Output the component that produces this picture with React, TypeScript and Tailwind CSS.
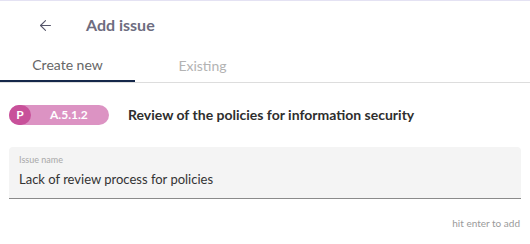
import { FiArrowLeft } from "react-icons/fi";

const App = () => {
  return (
    <div className="h-[244px] w-[530px] border-t border-[#e4e2f3] bg-white font-['Lato','Noto_Sans',sans-serif]">
      <div className="flex h-[48px] items-center pl-[37px]">
        <FiArrowLeft size={17} className="text-[#55556a]" strokeWidth={1.5} />
        <h1 className="ml-[32px] text-[16px] font-bold text-[#6d6c80]">
          Add issue
        </h1>
      </div>
      <div className="flex border-b border-[#dddddd]">
        <div className="flex h-[33px] w-[135px] items-center justify-center border-b-2 border-[#15274a] text-[14px] text-[#666666]">
          Create new
        </div>
        <div className="flex h-[33px] w-[135px] items-center justify-center text-[14px] text-[#b3b3b3]">
          Existing
        </div>
      </div>
      <div className="flex items-center px-[9px] pt-[21px]">
        <div className="flex h-[20px] w-[100px] items-center rounded-full bg-[#dc93c3]">
          <div className="flex h-[20px] w-[22px] items-center justify-center rounded-full bg-[#c8519a] text-[12px] font-bold text-white">
            P
          </div>
          <span className="ml-[19px] text-[12px] font-bold text-white">
            A.5.1.2
          </span>
        </div>
        <h2 className="ml-[19px] text-[14px] font-bold text-[#2e2e2e]">
          Review of the policies for information security
        </h2>
      </div>
      <div className="mx-[9px] mt-[22px] rounded-t-[4px] border-b border-[#8a8a8a] bg-[#f4f4f4] px-[10px] pb-[8px] pt-[7px]">
        <label className="block text-[9px] leading-[12px] text-[#a8a8a8]">
          Issue name
        </label>
        <input
          type="text"
          defaultValue="Lack of review process for policies"
          className="mt-[4px] w-full bg-transparent text-[13px] leading-[18px] text-[#333333] focus:outline-none"
        />
      </div>
      <div className="mt-[17px] pr-[10px] text-right text-[10px] text-[#9a9a9a]">
        hit enter to add
      </div>
    </div>
  );
};

export default App;
